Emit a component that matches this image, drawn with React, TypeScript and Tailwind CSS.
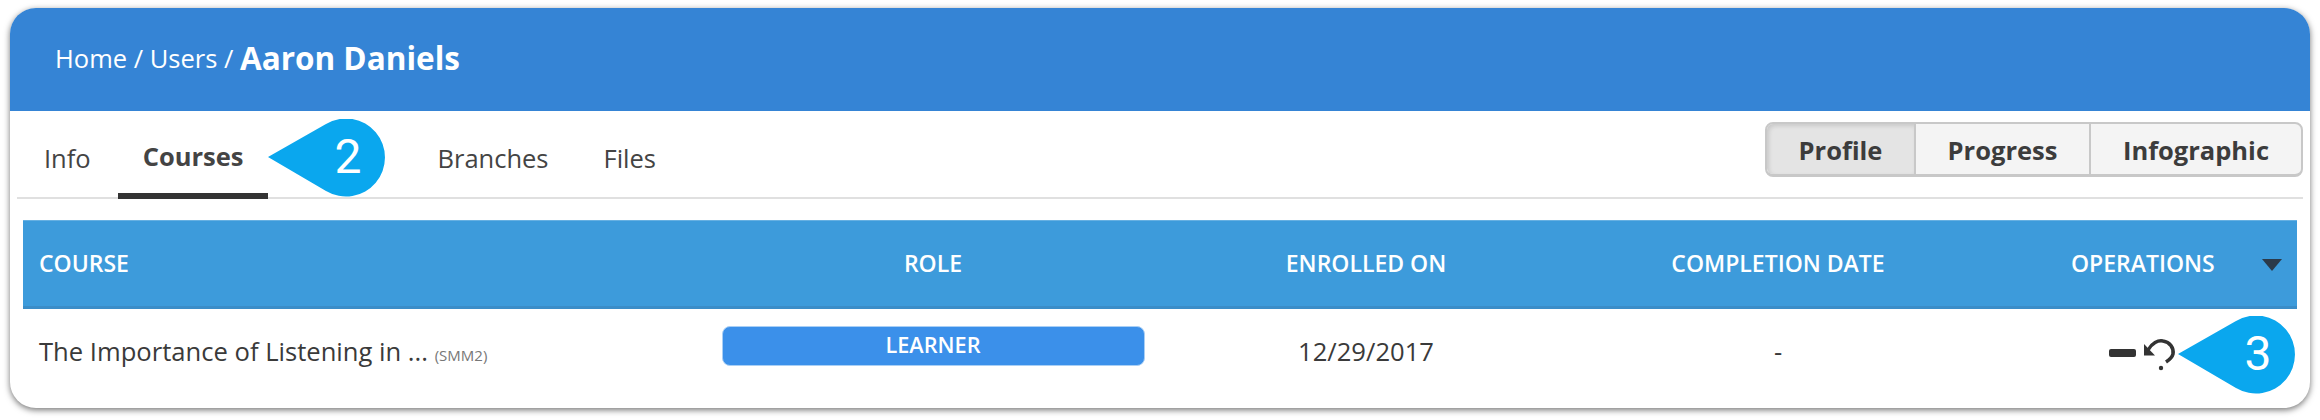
const font = { fontFamily: '"Open Sans", sans-serif' };

const Bubble = ({ n, className }: { n: string; className: string }) => (
  <div className={`absolute h-[78px] w-[118px] ${className}`}>
    <svg width="118" height="78" viewBox="0 0 118 78" className="absolute inset-0">
      <path d="M0 38 L58 5 A39 39 0 1 1 58 72 Z" fill="#0aa7ee" />
    </svg>
    <span className="absolute right-[13px] top-[10px] w-[50px] text-center font-['Roboto',sans-serif] text-[48px] leading-[56px] font-normal text-white">
      {n}
    </span>
  </div>
);

const Tab = ({ label, active }: { label: string; active?: boolean }) => (
  <div
    className={`flex h-[88px] items-center px-[25px] text-[25.5px] ${
      active ? "border-b-[6px] border-[#333333] pt-[8px] font-bold text-[#444444]" : "pt-[6px] text-[#444444]"
    }`}
  >
    {label}
  </div>
);

const App = () => {
  return (
    <div className="h-[420px] w-full bg-white px-[10px] pt-2" style={font}>
      <div className="relative h-[400px] w-full overflow-hidden rounded-[26px] bg-white shadow-[0_2px_6px_rgba(0,0,0,0.55)]">
        <div className="flex h-[103px] items-center bg-[#3584d5] pb-[3px] pl-[45px] text-white">
          <span className="text-[25.5px]">Home / Users /&nbsp;</span>
          <span className="text-[31.5px] font-bold">Aaron Daniels</span>
        </div>

        <div className="mx-[7px] flex h-[88px] items-start justify-between border-b-2 border-[#e0e0e0] pl-[2px]">
          <div className="flex items-start gap-[2px]">
            <Tab label="Info" />
            <Tab label="Courses" active />
            <div className="ml-[142px] flex gap-[5px]">
              <Tab label="Branches" />
              <Tab label="Files" />
            </div>
          </div>
          <div className="mt-[11px] flex h-[55px] w-[538px] rounded-[8px] border-2 border-b-[3px] border-[#c8c8c8] bg-[#f4f4f4] pt-0 text-[25.5px] font-bold text-[#3c3c3c]">
            <div className="flex w-[147px] items-center justify-center rounded-l-[6px] bg-[#e4e4e4] pt-[2px] shadow-[inset_2px_2px_4px_rgba(0,0,0,0.12)]">
              Profile
            </div>
            <div className="flex w-[177px] items-center justify-center border-x-2 border-[#c8c8c8] pt-[2px]">Progress</div>
            <div className="flex flex-1 items-center justify-center pt-[2px]">Infographic</div>
          </div>
        </div>

        <div className="mx-[13px] mt-[21px] grid h-[89px] grid-cols-[688px_444px_422px_402px_1fr] items-center border-t border-b-[3px] border-t-[#66b0e2] border-b-[#3b8dc8] bg-[#3d9bdb] text-[23px] font-semibold text-white">
          <div className="pl-4">COURSE</div>
          <div className="text-center">ROLE</div>
          <div className="text-center">ENROLLED ON</div>
          <div className="text-center">COMPLETION DATE</div>
          <div className="flex items-center pl-[92px]">
            <span>OPERATIONS</span>
            <span className="ml-[47px] mt-[2px] h-0 w-0 border-x-[10px] border-t-[12px] border-x-transparent border-t-[#2b3a4a]" />
          </div>
        </div>

        <div className="mx-[13px] grid h-[90px] grid-cols-[688px_444px_422px_402px_1fr] items-center text-[25.6px] text-[#3a3a3a]">
          <div className="pb-[4px] pl-4">
            The Importance of Listening in ... <span className="text-[15px] text-[#777777]">(SMM2)</span>
          </div>
          <div className="flex justify-center">
            <div className="mb-[17px] flex h-[40px] w-[423px] items-center justify-center rounded-[8px] border border-[#a9cff5] bg-[#3b90ea] text-[21.7px] font-semibold text-white">
              LEARNER
            </div>
          </div>
          <div className="pb-[4px] text-center">12/29/2017</div>
          <div className="pb-[4px] text-center">-</div>
          <div className="flex items-center pl-[130px]">
            <svg width="70" height="36" viewBox="0 0 70 36">
              <rect x="0" y="13" width="27" height="8" rx="2" fill="#333333" />
              <path d="M35 8 V19.5 H46 Z" fill="#333333" />
              <path d="M39 14 C43 7 49 4 54 5 C61 6 65 12 64 18 C63 22 60 24 57 26" fill="none" stroke="#333333" strokeWidth="3.5" />
              <circle cx="52" cy="32" r="2.2" fill="#333333" />
            </svg>
          </div>
        </div>

        <Bubble n="2" className="left-[258px] top-[111px]" />
        <Bubble n="3" className="left-[2168px] top-[308px]" />
      </div>
    </div>
  );
};

export default App;
